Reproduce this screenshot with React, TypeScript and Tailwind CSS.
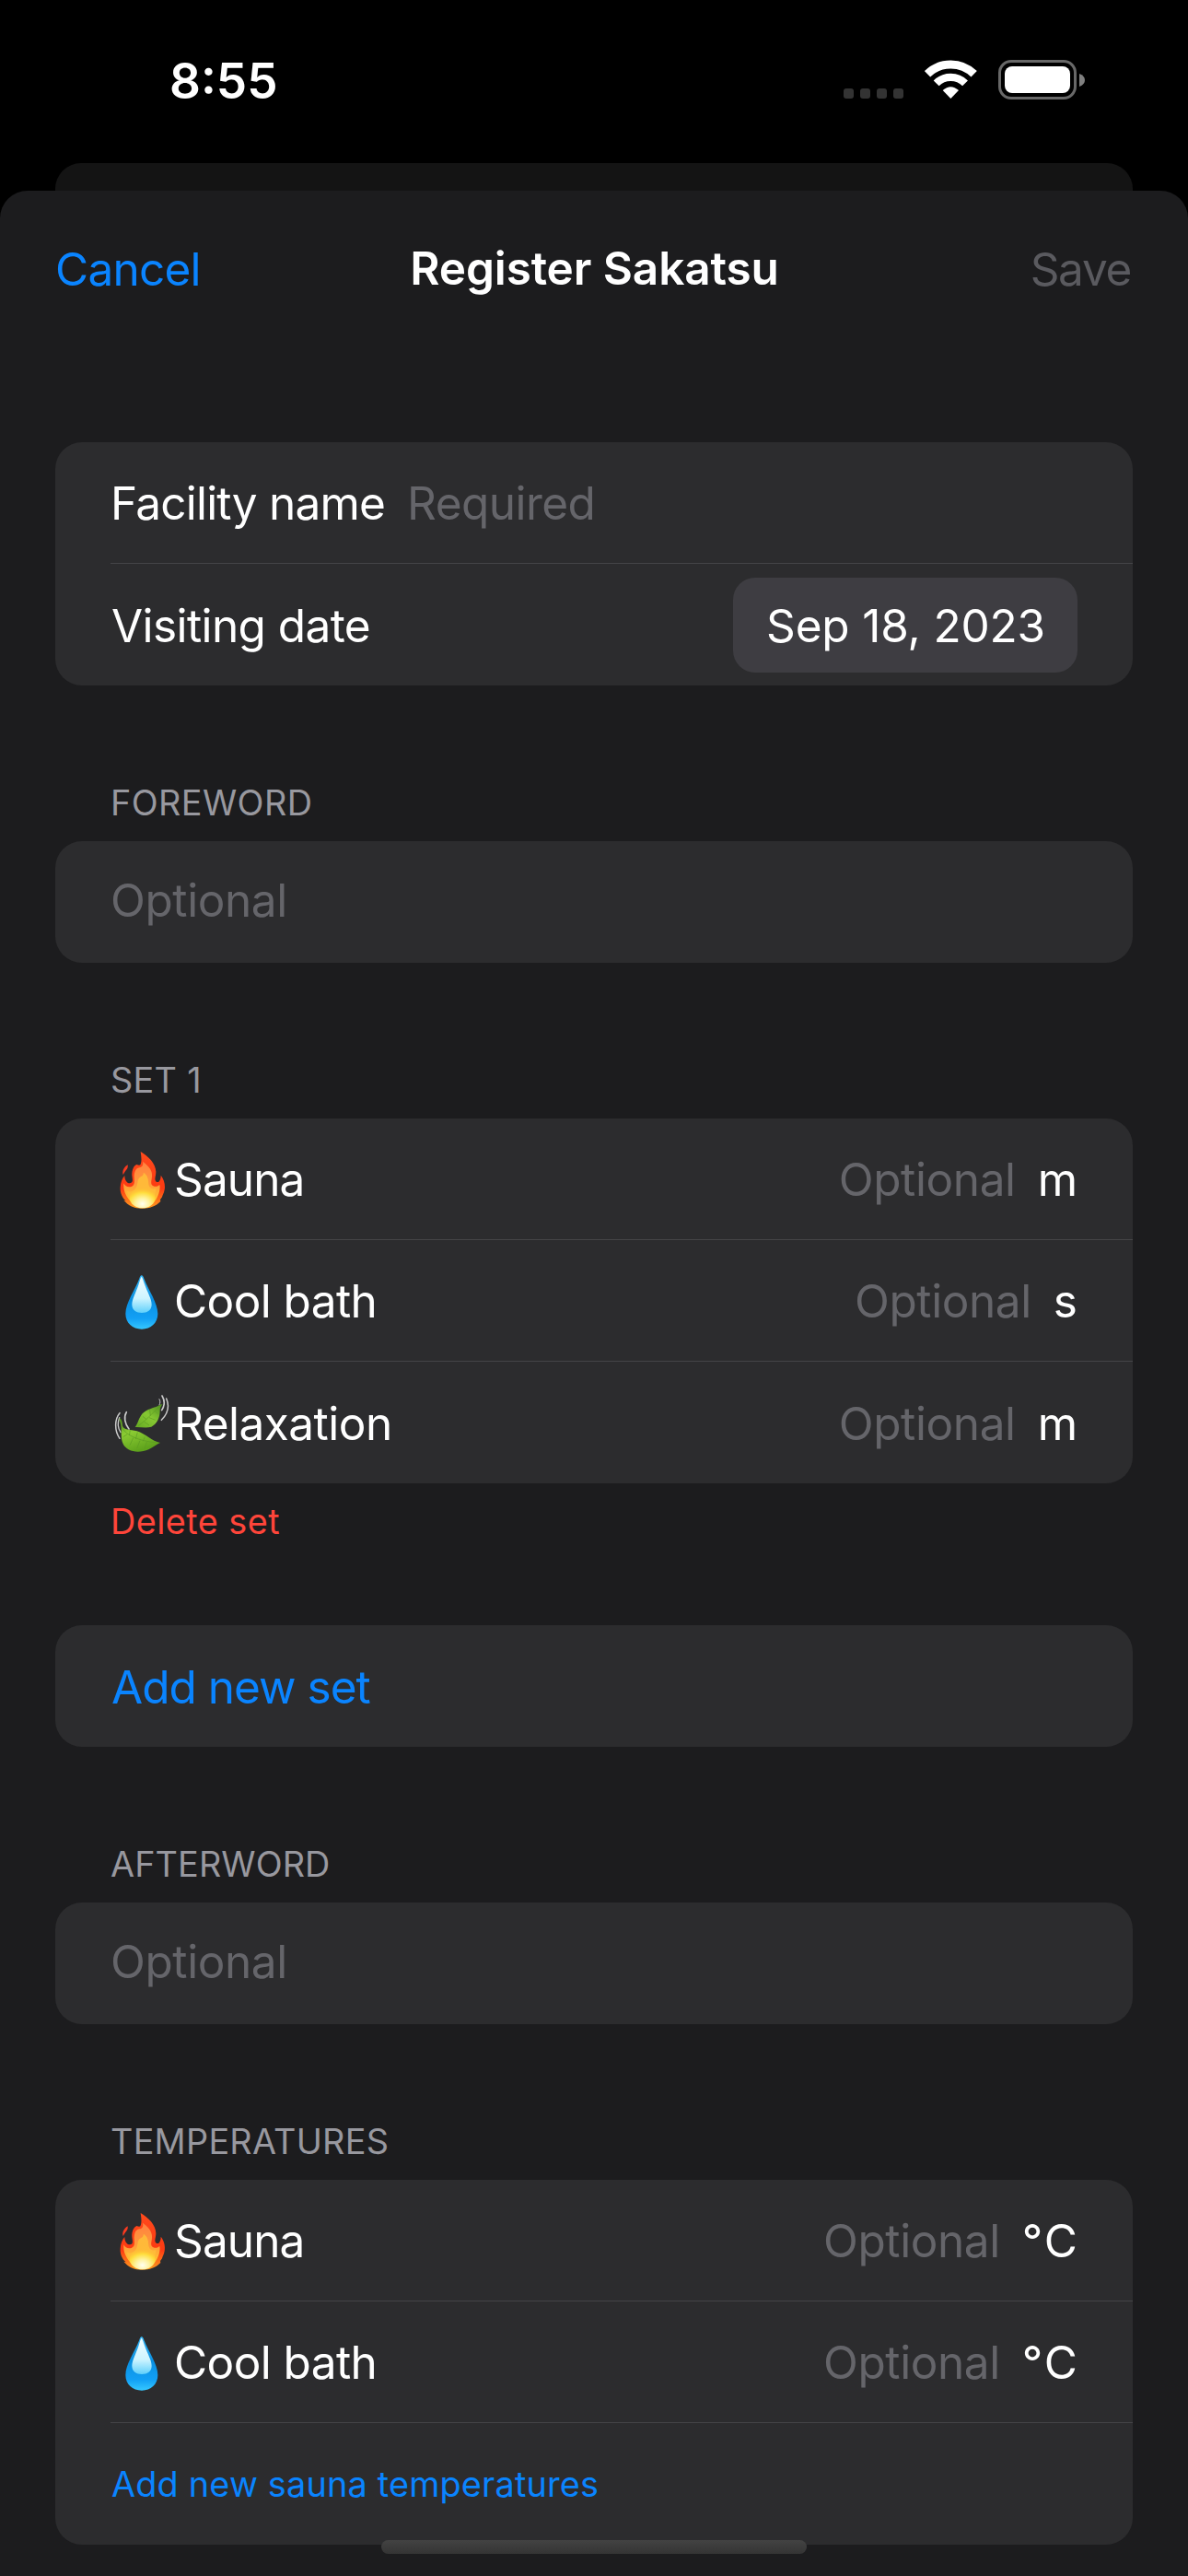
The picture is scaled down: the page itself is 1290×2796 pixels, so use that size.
import type { ReactNode } from "react";

function FireIcon({ id }: { id: string }) {
  return (
    <svg viewBox="60 51 192 198" className="h-[66px] w-[64px] shrink-0">
      <defs>
        <linearGradient id={id + "outer"} x1="0" y1="0" x2="0" y2="1"><stop offset="0" stopColor="#ff4a1c" /><stop offset=".65" stopColor="#fb3a12" /><stop offset="1" stopColor="#ff9d1e" /></linearGradient>
        <linearGradient id={id + "inner"} x1="0" y1="0" x2="0" y2="1"><stop offset="0" stopColor="#ff8140" /><stop offset=".5" stopColor="#ff9a3a" /><stop offset="1" stopColor="#ffd52e" /></linearGradient>
        <radialGradient id={id + "core"} cx=".5" cy=".8" r=".75"><stop offset="0" stopColor="#fffff0" /><stop offset=".35" stopColor="#fff3a0" /><stop offset=".7" stopColor="#ffdd3c" /><stop offset="1" stopColor="#ffc030" stopOpacity="0" /></radialGradient>
      </defs>
      <path fill={`url(#${id}outer)`} d="M158 60C183 76 207 97 208 126C208 141 201 151 209 158C217 163 224 153 224 137C235 151 239 170 236 184C234 196 229 203 228 208L222 216L223 222C208 238 187 245 163 245C137 245 118 236 103 218L110 220C96 208 91 191 92 176C93 160 98 147 106 138C106 151 112 163 123 163C136 162 131 148 130 137C129 119 136 106 145 102C151 104 154 105 157 103C163 91 160 75 158 60Z" />
      <path fill="#fa3a20" d="M116 103C118 112 113 118 109 122C105 127 104 131 101 135C97 125 103 111 116 103Z" />
      <path fill={`url(#${id}inner)`} d="M165 92C180 103 194 117 195 134C196 149 190 158 194 167C200 175 210 176 220 168C224 184 214 212 200 226C184 243 144 243 127 224C112 208 100 186 103 163C108 173 117 177 128 174C142 169 137 152 137 139C138 121 145 113 154 112C163 111 168 104 165 92Z" />
      <path fill="#ffbd3a" opacity=".9" d="M167 128C182 136 183 151 184 165C185 180 200 184 208 180C207 208 194 232 164 236C131 235 117 209 114 188C125 194 139 188 145 174C150 160 147 151 155 144C162 139 169 137 167 128Z" />
      <ellipse cx="164" cy="209" rx="42" ry="35" fill={`url(#${id}core)`} />
    </svg>
  );
}

function DropIcon({ id }: { id: string }) {
  return (
    <svg viewBox="60 447 192 198" className="h-[66px] w-[64px] shrink-0">
      <defs>
        <linearGradient id={id + "body"} x1="0" y1="0" x2="0" y2="1"><stop offset="0" stopColor="#35b7f5" /><stop offset=".45" stopColor="#0a8fe0" /><stop offset=".8" stopColor="#12a0f5" /><stop offset="1" stopColor="#35c8ff" /></linearGradient>
        <linearGradient id={id + "shine"} x1="0" y1="0" x2="0" y2="1"><stop offset="0" stopColor="#f4fdff" /><stop offset=".6" stopColor="#cdf4ff" /><stop offset="1" stopColor="#5fd0fb" /></linearGradient>
      </defs>
      <path fill={`url(#${id}body)`} d="M161 463C165 463 167 468 169 473C183 511 214 551 214 588C214 618 191 638 162 638C132 638 109 618 109 588C109 551 140 511 154 473C156 468 158 463 161 463Z" />
      <path fill={`url(#${id}shine)`} d="M161 467C165 472 167 481 171 492C181 519 194 540 194 558C194 576 180 585 162 585C144 585 130 576 130 558C130 540 143 518 151 494C155 482 157 472 161 467Z" />
    </svg>
  );
}

function LeafIcon() {
  return (
    <svg viewBox="60 843 192 198" className="h-[66px] w-[64px] shrink-0">
      <defs>
        <linearGradient id="leafLower" x1="0" y1="0" x2=".4" y2="1"><stop offset="0" stopColor="#4d8f1c" /><stop offset=".45" stopColor="#8bcb33" /><stop offset="1" stopColor="#5fa31c" /></linearGradient>
        <linearGradient id="leafUpper" x1="1" y1="0" x2="0" y2="1"><stop offset="0" stopColor="#4b8a20" /><stop offset=".5" stopColor="#86c832" /><stop offset="1" stopColor="#64a822" /></linearGradient>
      </defs>
      <g fill="none" stroke="#c9c9c9" strokeLinecap="round">
        <path strokeWidth="5" d="M228 855C238 872 236 888 227 902" />
        <path strokeWidth="4.5" d="M242 864C252 888 247 913 226 934" />
        <path strokeWidth="3" d="M219 866C223 873 222 879 219 885" />
        <path strokeWidth="5" d="M112 908C102 925 107 947 120 963" />
        <path strokeWidth="4.5" d="M90 911C73 931 72 968 90 994" />
        <path strokeWidth="4" d="M89 926C82 944 85 962 93 974" />
      </g>
      <path fill="url(#leafUpper)" d="M230 882C225 888 221 894 221 904C221 926 211 948 193 956C175 961 157 956 140 957C150 946 151 928 164 913C178 899 202 894 213 889C219 885 225 882 230 882Z" />
      <path fill="none" stroke="#5c9a22" strokeWidth="2" d="M225 886C205 902 184 928 150 953M190 920L188 901M205 905L214 914M177 932L165 922M186 926L206 934M170 940L186 951" />
      <path fill="url(#leafLower)" d="M89 928C97 930 98 941 99 953C103 966 124 964 146 970C174 978 195 1004 222 1008C204 1015 193 1030 167 1035C139 1041 111 1033 101 1012C92 992 97 967 94 950C92 941 88 934 89 928Z" />
      <path fill="none" stroke="#5c9a22" strokeWidth="2" d="M97 958C112 984 148 1001 212 1008M121 984L124 968M142 996L148 974M166 1003L172 988M115 980L101 989M134 992L123 1016M156 1001L146 1026M178 1005L172 1026" />
    </svg>
  );
}

function StatusBar() {
  return (
    <div className="flex h-[177px] items-start justify-between pr-[112px] pl-[184px]">
      <span className="mt-[57px] text-[53px] leading-[63px] font-semibold text-white">8:55</span>
      <div className="mt-[65px] flex h-[43px] items-end">
        <div className="mb-px flex gap-[7px]">
          <i className="size-[11px] rounded-[3px] bg-[#333]" />
          <i className="size-[11px] rounded-[3px] bg-[#333]" />
          <i className="size-[11px] rounded-[3px] bg-[#333]" />
          <i className="size-[11px] rounded-[3px] bg-[#333]" />
        </div>
        <svg viewBox="312 45 171 129" className="ml-[23px] h-[43px] w-[57px]">
          <path fill="none" stroke="#fff" strokeWidth="27" d="M321 91A108.5 108.5 0 0 1 473 91" />
          <path fill="none" stroke="#fff" strokeWidth="25" d="M350 121A66.5 66.5 0 0 1 444 121" />
          <path fill="#fff" d="M371 144Q397 121 423 144L397 171Z" />
        </svg>
        <div className="ml-[23px] flex items-center gap-[3px]">
          <div className="h-[43px] w-[85px] rounded-[14px] border-[3.5px] border-[#686868] p-[4px]">
            <div className="h-full w-[71px] rounded-[8px] bg-white" />
          </div>
          <svg viewBox="0 0 6 14" className="h-[14px] w-[6px]">
            <path fill="#808080" d="M0 0C8 2.5 8 11.5 0 14Z" />
          </svg>
        </div>
      </div>
    </div>
  );
}

function Card({ children }: { children: ReactNode }) {
  return <div className="rounded-[29px] bg-[#2c2c2e] pl-[60px]">{children}</div>;
}

function Row({ children, divider = false, className = "pt-px" }: { children: ReactNode; divider?: boolean; className?: string }) {
  return (
    <div className={`flex h-[132px] items-center pr-[60px] ${divider ? "border-b border-[#444447]" : ""} ${className}`}>
      {children}
    </div>
  );
}

function SectionTitle({ children, className }: { children: ReactNode; className: string }) {
  return <h2 className={`mt-[104px] mb-[19px] pl-[60px] text-[37.8px] leading-[46px] text-[#98989f] ${className}`}>{children}</h2>;
}

function Optional() {
  return <span className="tracking-[-0.4px] text-[#65656a]">Optional</span>;
}

function EntryRow({ icon, label, labelClass, unit, unitClass = "", divider = false }: { icon: ReactNode; label: string; labelClass: string; unit: string; unitClass?: string; divider?: boolean }) {
  return (
    <Row divider={divider} className="pt-0">
      {icon}
      <span className={`mt-px ml-[5px] flex-1 ${labelClass}`}>{label}</span>
      <span className="mt-px flex gap-6">
        <Optional />
        <span className={unitClass}>{unit}</span>
      </span>
    </Row>
  );
}

export default function App() {
  return (
    <div className="relative flex h-[2796px] w-[1290px] flex-col overflow-hidden bg-black font-['Inter',sans-serif] text-[49.5px] leading-[60px] text-white">
      <StatusBar />
      <div className="mx-[60px] h-[30px] shrink-0 rounded-t-[28px] bg-[#141414]" />
      <div className="flex-1 rounded-t-[30px] bg-[#1c1c1e] px-[60px]">
        <header className="grid h-[273px] grid-cols-[1fr_auto_1fr] items-start pt-[55px]">
          <button className="justify-self-start tracking-[-0.77px] text-[#0a84ff]">Cancel</button>
          <h1 className="-mt-px ml-px font-semibold tracking-[-0.1px]">Register Sakatsu</h1>
          <button className="mr-[2px] justify-self-end tracking-[-1.3px] text-[#5a5a5f]">Save</button>
        </header>

        <Card>
          <Row divider>
            <span className="tracking-[-0.78px]">Facility name</span>
            <span className="ml-6 tracking-[-0.55px] text-[#65656a]">Required</span>
          </Row>
          <Row className="">
            <span className="mt-px ml-px flex-1 tracking-[-0.58px]">Visiting date</span>
            <span className="flex h-[103px] w-[374px] items-center justify-center rounded-[24px] bg-[#3e3d42] pt-px pl-px tracking-[-0.16px]">Sep 18, 2023</span>
          </Row>
        </Card>

        <SectionTitle className="tracking-[0.42px]">FOREWORD</SectionTitle>
        <Card>
          <Row className="pb-[5px]"><Optional /></Row>
        </Card>

        <SectionTitle className="tracking-[0.3px]">SET 1</SectionTitle>
        <Card>
          <EntryRow divider icon={<FireIcon id="setFire" />} label="Sauna" labelClass="tracking-[-0.87px]" unit="m" />
          <EntryRow divider icon={<DropIcon id="setDrop" />} label="Cool bath" labelClass="tracking-[-0.59px]" unit="s" />
          <EntryRow icon={<LeafIcon />} label="Relaxation" labelClass="tracking-[-0.5px]" unit="m" />
        </Card>
        <div className="mt-[18px] mb-[90px] pl-[60px] text-[37.8px] leading-[46px] tracking-[0.45px] text-[#ff453a]">Delete set</div>

        <Card>
          <Row><button className="ml-px tracking-[-0.98px] text-[#0a84ff]">Add new set</button></Row>
        </Card>

        <SectionTitle className="tracking-[0.1px]">AFTERWORD</SectionTitle>
        <Card>
          <Row className="pb-[5px]"><Optional /></Row>
        </Card>

        <SectionTitle className="tracking-[0.25px]">TEMPERATURES</SectionTitle>
        <Card>
          <EntryRow divider icon={<FireIcon id="tempFire" />} label="Sauna" labelClass="tracking-[-0.87px]" unit="°C" unitClass="-mr-[2px] tracking-[2px]" />
          <EntryRow divider icon={<DropIcon id="tempDrop" />} label="Cool bath" labelClass="tracking-[-0.59px]" unit="°C" unitClass="-mr-[2px] tracking-[2px]" />
          <Row className="">
            <button className="ml-px text-[37.8px] leading-[46px] tracking-[0.2px] text-[#0a84ff]">Add new sauna temperatures</button>
          </Row>
        </Card>
      </div>
      <div className="absolute bottom-[24px] left-[414px] h-[15px] w-[462px] rounded-full bg-linear-to-b from-[#434343] to-[#343434]" />
    </div>
  );
}
